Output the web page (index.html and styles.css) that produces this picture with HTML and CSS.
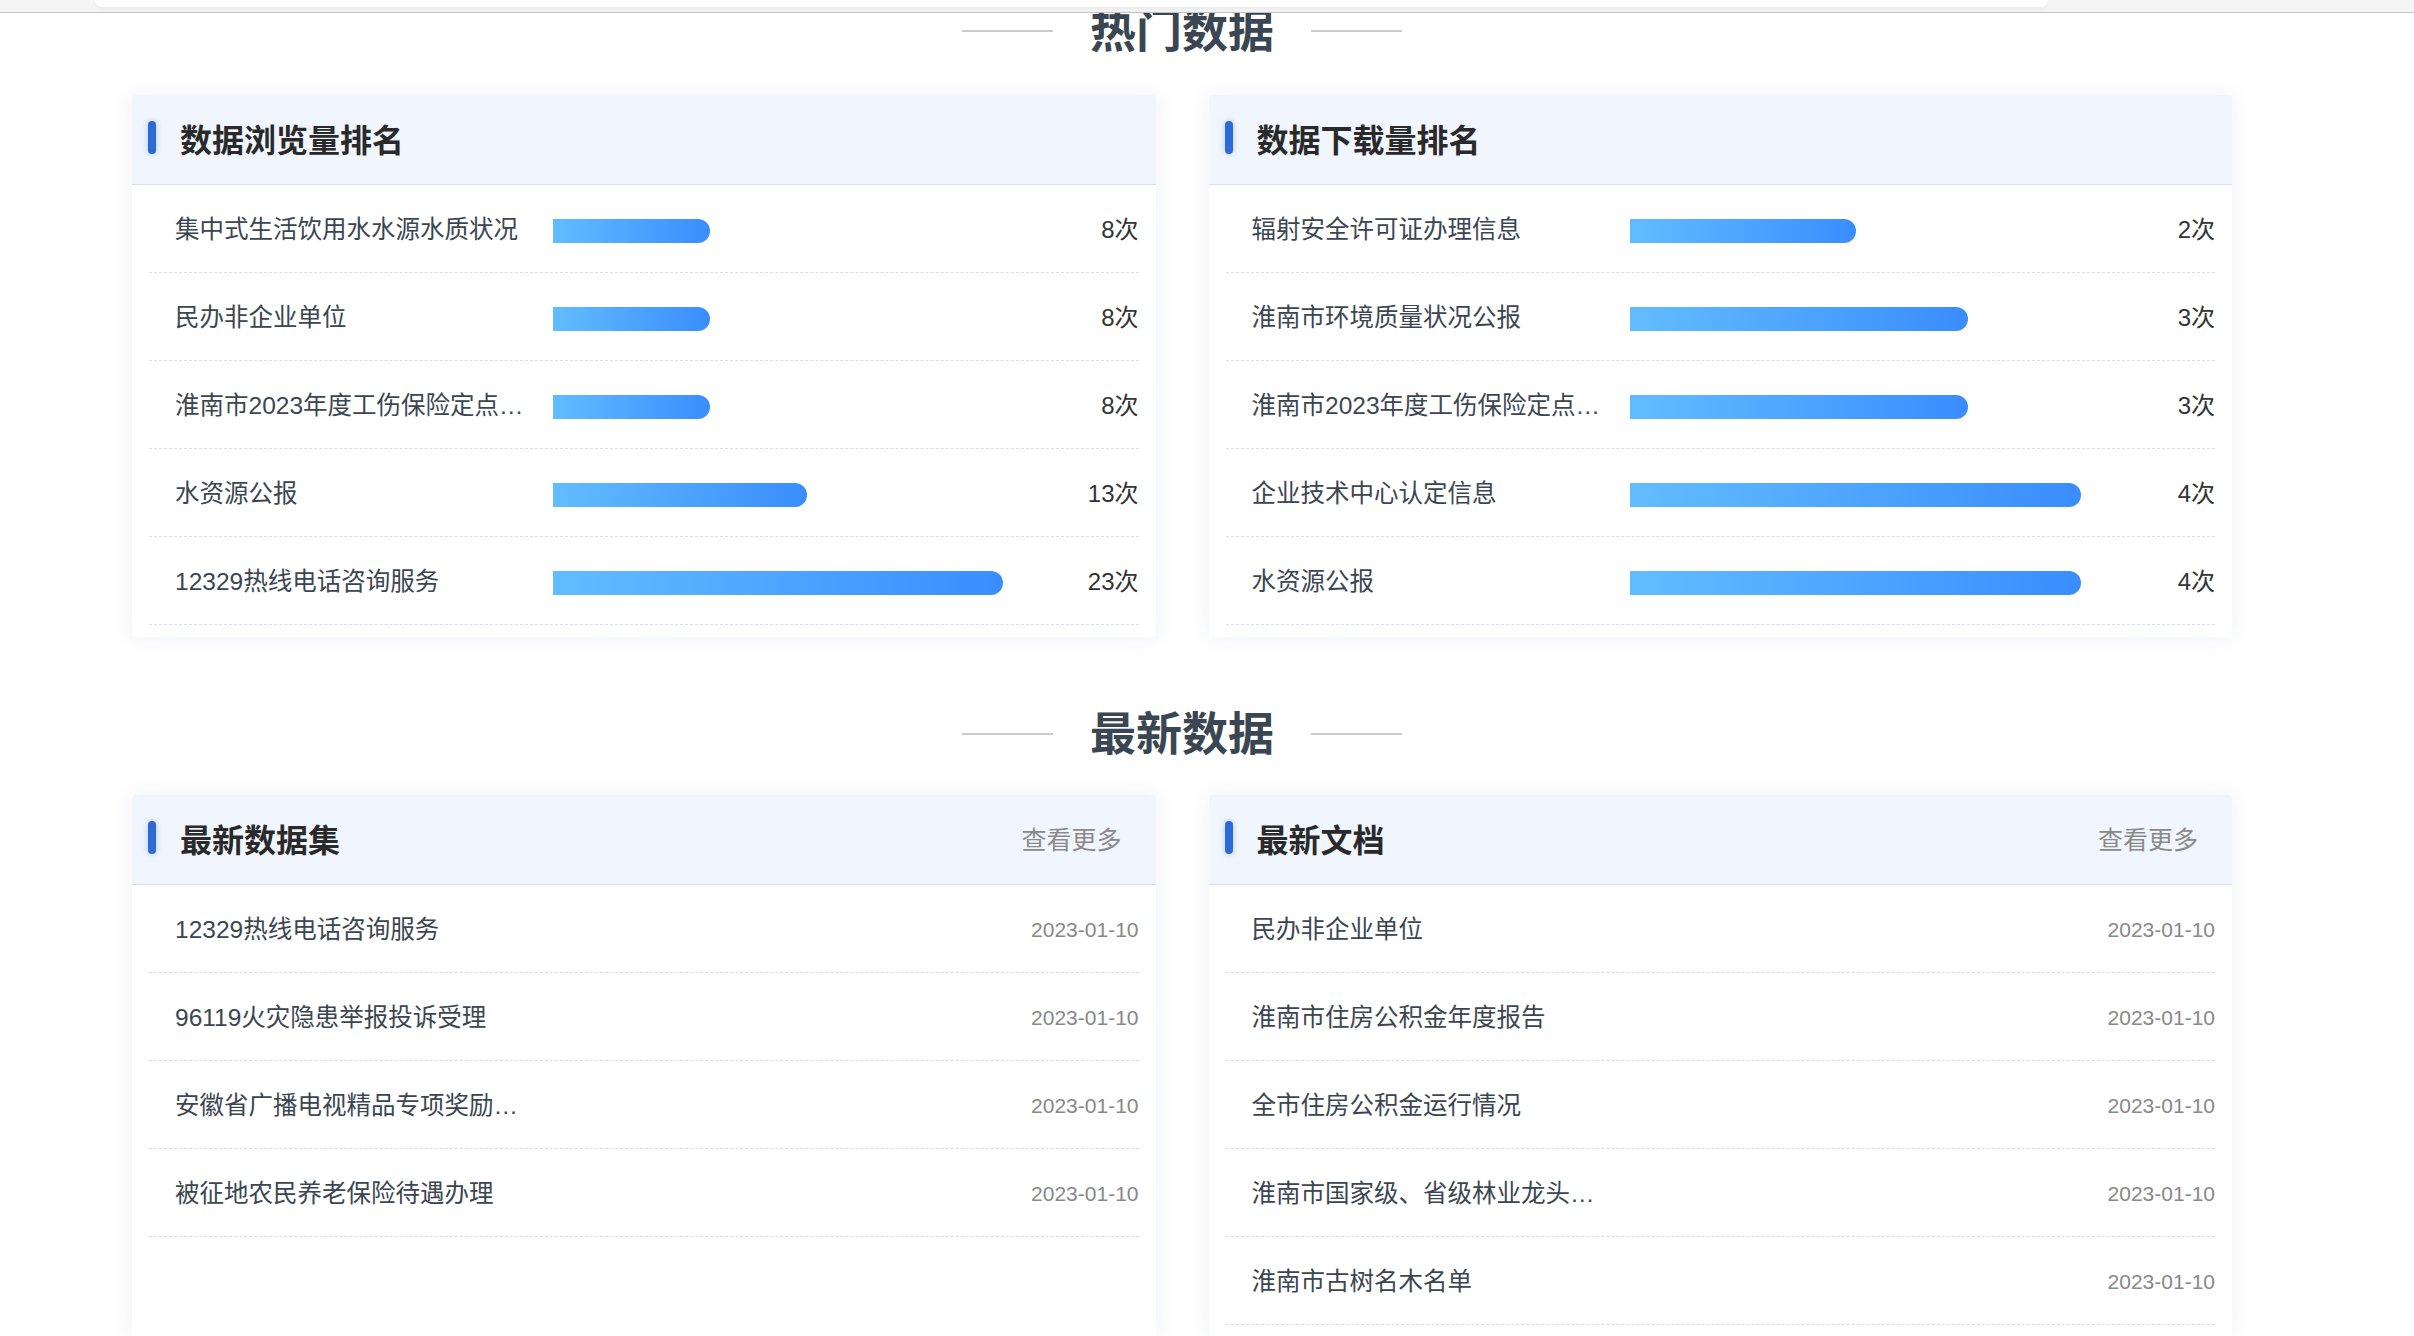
FILE: index.html
```html
<!DOCTYPE html>
<html lang="zh-CN">
<head>
<meta charset="utf-8">
<title>热门数据 / 最新数据</title>
<link rel="stylesheet" href="styles.css">
</head>
<body>
<div class="topbar"><div class="topbar-card"></div></div>

<main class="container">
  <h2 class="section-title"><span>热门数据</span></h2>
  <div class="grid">
    <section class="card">
      <div class="card-head"><i class="mark"></i><h3 class="card-title">数据浏览量排名</h3></div>
      <ul class="list">
        <li class="row"><span class="label">集中式生活饮用水水源水质状况</span><span class="bar" style="width:157px"></span><span class="count">8次</span></li>
        <li class="row"><span class="label">民办非企业单位</span><span class="bar" style="width:157px"></span><span class="count">8次</span></li>
        <li class="row"><span class="label">淮南市2023年度工伤保险定点医疗机构名单</span><span class="bar" style="width:157px"></span><span class="count">8次</span></li>
        <li class="row"><span class="label">水资源公报</span><span class="bar" style="width:254px"></span><span class="count">13次</span></li>
        <li class="row"><span class="label">12329热线电话咨询服务</span><span class="bar" style="width:450px"></span><span class="count">23次</span></li>
      </ul>
    </section>
    <section class="card">
      <div class="card-head"><i class="mark"></i><h3 class="card-title">数据下载量排名</h3></div>
      <ul class="list">
        <li class="row"><span class="label">辐射安全许可证办理信息</span><span class="bar" style="width:226px"></span><span class="count">2次</span></li>
        <li class="row"><span class="label">淮南市环境质量状况公报</span><span class="bar" style="width:338px"></span><span class="count">3次</span></li>
        <li class="row"><span class="label">淮南市2023年度工伤保险定点医疗机构名单</span><span class="bar" style="width:338px"></span><span class="count">3次</span></li>
        <li class="row"><span class="label">企业技术中心认定信息</span><span class="bar" style="width:451px"></span><span class="count">4次</span></li>
        <li class="row"><span class="label">水资源公报</span><span class="bar" style="width:451px"></span><span class="count">4次</span></li>
      </ul>
    </section>
  </div>

  <h2 class="section-title second"><span>最新数据</span></h2>
  <div class="grid">
    <section class="card">
      <div class="card-head"><i class="mark"></i><h3 class="card-title">最新数据集</h3><a class="more">查看更多</a></div>
      <ul class="list">
        <li class="row"><span class="label wide">12329热线电话咨询服务</span><span class="date">2023-01-10</span></li>
        <li class="row"><span class="label wide">96119火灾隐患举报投诉受理</span><span class="date">2023-01-10</span></li>
        <li class="row"><span class="label wide">安徽省广播电视精品专项奖励资金项目</span><span class="date">2023-01-10</span></li>
        <li class="row"><span class="label wide">被征地农民养老保险待遇办理</span><span class="date">2023-01-10</span></li>
      </ul>
    </section>
    <section class="card">
      <div class="card-head"><i class="mark"></i><h3 class="card-title">最新文档</h3><a class="more">查看更多</a></div>
      <ul class="list">
        <li class="row"><span class="label wide">民办非企业单位</span><span class="date">2023-01-10</span></li>
        <li class="row"><span class="label wide">淮南市住房公积金年度报告</span><span class="date">2023-01-10</span></li>
        <li class="row"><span class="label wide">全市住房公积金运行情况</span><span class="date">2023-01-10</span></li>
        <li class="row"><span class="label wide">淮南市国家级、省级林业龙头企业名单</span><span class="date">2023-01-10</span></li>
        <li class="row"><span class="label wide">淮南市古树名木名单</span><span class="date">2023-01-10</span></li>
      </ul>
    </section>
  </div>
</main>
</body>
</html>
```

FILE: styles.css
```css
* { box-sizing: border-box; }

html, body {
  margin: 0;
  padding: 0;
  background: #ffffff;
  font-family: "Liberation Sans", "Noto Sans CJK SC", sans-serif;
  overflow: hidden;
}

.topbar {
  position: fixed;
  top: 0;
  left: 0;
  right: 0;
  height: 13px;
  background: #f5f5f5;
  border-bottom: 1px solid #c4c4c4;
  z-index: 10;
}

.topbar-card {
  margin: 0 366px 0 95px;
  height: 7px;
  background: #ffffff;
  border-radius: 0 0 12px 12px;
  box-shadow: 0 2px 5px rgba(0, 0, 0, 0.05);
}

.container {
  width: 2100px;
  margin-left: 132px;
  padding-top: 1px;
}

.section-title {
  margin: 0 0 34px;
  height: 60px;
  display: flex;
  align-items: center;
  justify-content: center;
  gap: 37px;
  font-size: 46px;
  font-weight: 700;
  color: #3a4652;
  line-height: 1;
}

.section-title::before,
.section-title::after {
  content: "";
  width: 91px;
  height: 2px;
  background: #cccccc;
}

.section-title.second {
  margin-top: 67px;
  margin-bottom: 31px;
}

.grid {
  display: grid;
  grid-template-columns: 1fr 1fr;
  column-gap: 53px;
}

.card {
  background: #ffffff;
  border-radius: 4px;
  box-shadow: 0 0 22px rgba(40, 70, 130, 0.08);
  padding-bottom: 12px;
}

.card-head {
  height: 90px;
  display: flex;
  align-items: center;
  padding: 0 34px 4px 16px;
  background: #f1f6fe;
  border-bottom: 1px solid #d8e0ec;
  border-radius: 4px 4px 0 0;
}

.mark {
  display: block;
  width: 8px;
  height: 33px;
  border-radius: 4px;
  background: #2d6ad6;
  box-shadow: 0 0 6px rgba(45, 106, 214, 0.35);
  margin-right: 24px;
}

.card-title {
  margin: 0;
  font-size: 32px;
  font-weight: 700;
  color: #2a2a2a;
}

.more {
  margin-left: auto;
  font-size: 25px;
  color: #8a8a8a;
}

.list {
  list-style: none;
  margin: 0;
  padding: 0 17px;
}

.row {
  height: 88px;
  display: flex;
  align-items: center;
  padding-left: 26px;
  padding-bottom: 2px;
  border-bottom: 1px dashed #d9dde5;
}

.label {
  flex: none;
  width: 356px;
  margin-right: 22px;
  font-size: 24.5px;
  color: #3b4651;
  white-space: nowrap;
  overflow: hidden;
  text-overflow: ellipsis;
}

.bar {
  display: block;
  height: 24px;
  margin-top: 6px;
  border-radius: 0 12px 12px 0;
  background: linear-gradient(90deg, #62bdff 0%, #3a8dff 100%);
}

.count {
  margin-left: auto;
  font-size: 24px;
  color: #333333;
}

.date {
  margin-left: auto;
  margin-top: 4px;
  font-size: 21px;
  color: #888888;
}
```
